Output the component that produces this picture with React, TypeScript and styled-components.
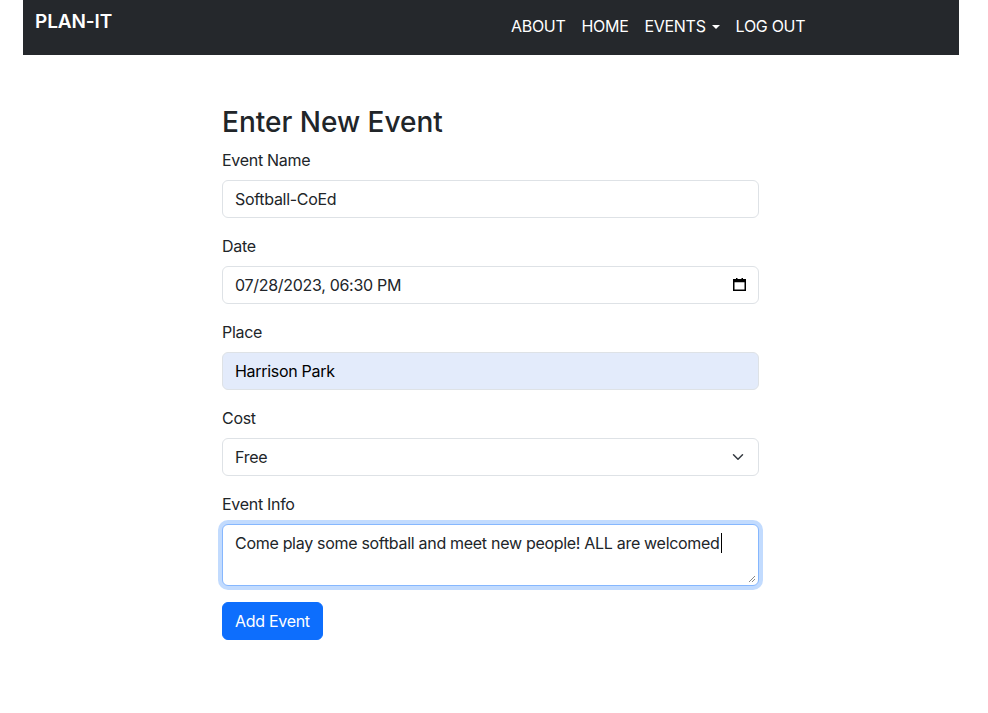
import React from "react";
import styled, { createGlobalStyle } from "styled-components";

const Global = createGlobalStyle`
  html, body { margin: 0; padding: 0; background: #fff; }
  body {
    font-family: Inter, "Noto Sans", "Liberation Sans", sans-serif;
    font-size: 16px;
    line-height: 1.5;
    color: #212529;
    letter-spacing: -0.3px;
  }
  * { box-sizing: border-box; }
`;

const Navbar = styled.nav`
  width: 936px;
  margin-left: 23px;
  height: 55px;
  background: #25282c;
  display: grid;
  grid-template-columns: 468px auto;
  align-items: start;
  padding-left: 12px;
`;

const Brand = styled.a`
  color: #fff;
  font-size: 19px;
  font-weight: 600;
  letter-spacing: -0.1px;
  text-decoration: none;
  margin-top: 8px;
  line-height: 28px;
`;

const NavList = styled.ul`
  list-style: none;
  margin: 6px 0 0;
  padding: 0;
  display: flex;
  align-items: center;
`;

const NavLink = styled.a`
  display: flex;
  align-items: center;
  color: #fff;
  text-decoration: none;
  font-size: 16px;
  line-height: 24px;
  padding: 8px 8px;
`;

const Caret = styled.span`
  display: inline-block;
  margin-left: 6px;
  width: 0;
  height: 0;
  border-top: 4.5px solid #fff;
  border-left: 4.5px solid transparent;
  border-right: 4.5px solid transparent;
  margin-top: 1px;
`;

const Main = styled.main`
  margin-left: 222px;
  width: 537px;
  padding-top: 51px;
`;

const Heading = styled.h3`
  margin: 0 0 8px;
  font-size: 28px;
  font-weight: 500;
  line-height: 1.2;
  letter-spacing: 0;
  color: #212529;
`;

const Group = styled.div`
  margin-bottom: 16px;
`;

const Label = styled.label`
  display: block;
  margin-bottom: 8px;
  font-size: 16px;
  line-height: 24px;
`;

const Field = styled.div<{ $autofill?: boolean; $focused?: boolean; $tall?: boolean }>`
  position: relative;
  display: flex;
  align-items: ${(p) => (p.$tall ? "flex-start" : "center")};
  justify-content: space-between;
  width: 100%;
  height: ${(p) => (p.$tall ? "62px" : "38px")};
  padding: 6px 12px;
  font-size: 16px;
  line-height: 24px;
  color: ${(p) => (p.$autofill ? "#000" : "#212529")};
  background: ${(p) => (p.$autofill ? "#e3ebfb" : "#fff")};
  border: 1px solid ${(p) => (p.$focused ? "#86b7fe" : "#dee2e6")};
  border-radius: 6px;
  box-shadow: ${(p) => (p.$focused ? "0 0 0 4px rgba(13,110,253,0.25)" : "none")};
`;

const Value = styled.span`
  display: inline-flex;
  align-items: center;
  white-space: nowrap;
`;

const TextCaret = styled.span`
  display: inline-block;
  width: 1px;
  height: 20px;
  background: #000;
  margin-left: 1px;
`;

const Grip = styled.svg`
  position: absolute;
  right: 2px;
  bottom: 2px;
`;

const Button = styled.button`
  font-family: inherit;
  font-size: 16px;
  line-height: 24px;
  letter-spacing: -0.3px;
  padding: 6px 12px;
  color: #fff;
  background: #0d6efd;
  border: 1px solid #0d6efd;
  border-radius: 6px;
  cursor: pointer;
`;

const CalendarIcon = () => (
  <svg width="13" height="13" viewBox="0 0 13 13" aria-hidden>
    <rect x="0.75" y="1.75" width="11.5" height="10.5" fill="none" stroke="#000" strokeWidth="1.5" />
    <rect x="0.75" y="1.75" width="11.5" height="2.5" fill="#000" />
    <rect x="3" y="0" width="1.5" height="2" fill="#000" />
    <rect x="8.5" y="0" width="1.5" height="2" fill="#000" />
  </svg>
);

const Chevron = () => (
  <svg width="16" height="12" viewBox="0 0 16 16" aria-hidden>
    <path d="m2 5 6 6 6-6" fill="none" stroke="#343a40" strokeWidth="2" strokeLinecap="round" strokeLinejoin="round" />
  </svg>
);

export default function App() {
  return (
    <>
      <Global />
      <Navbar>
        <Brand href="#">PLAN-IT</Brand>
        <NavList>
          <li><NavLink href="#">ABOUT</NavLink></li>
          <li><NavLink href="#">HOME</NavLink></li>
          <li><NavLink href="#">EVENTS<Caret /></NavLink></li>
          <li><NavLink href="#">LOG OUT</NavLink></li>
        </NavList>
      </Navbar>
      <Main>
        <Heading>Enter New Event</Heading>
        <Group>
          <Label>Event Name</Label>
          <Field><Value>Softball-CoEd</Value></Field>
        </Group>
        <Group>
          <Label>Date</Label>
          <Field>
            <Value>07/28/2023, 06:30 PM</Value>
            <CalendarIcon />
          </Field>
        </Group>
        <Group>
          <Label>Place</Label>
          <Field $autofill><Value>Harrison Park</Value></Field>
        </Group>
        <Group>
          <Label>Cost</Label>
          <Field>
            <Value>Free</Value>
            <Chevron />
          </Field>
        </Group>
        <Group>
          <Label>Event Info</Label>
          <Field $focused $tall>
            <Value>
              Come play some softball and meet new people! ALL are welcomed
              <TextCaret />
            </Value>
            <Grip width="8" height="8" viewBox="0 0 8 8" aria-hidden>
              <path d="M7 1 1 7M7 4 4 7" stroke="#888" strokeWidth="1" />
            </Grip>
          </Field>
        </Group>
        <Button>Add Event</Button>
      </Main>
    </>
  );
}
